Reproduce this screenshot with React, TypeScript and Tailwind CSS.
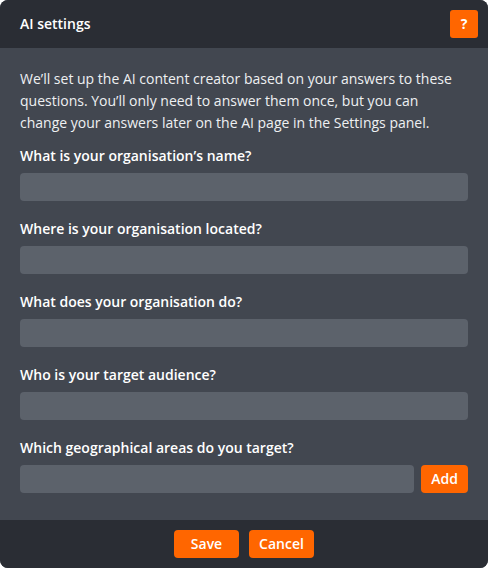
import React from "react";

const questions = [
  "What is your organisation\u2019s name?",
  "Where is your organisation located?",
  "What does your organisation do?",
  "Who is your target audience?",
];

export default function App() {
  return (
    <div
      className="w-[488px] h-[568px] bg-white"
      style={{ fontFamily: '"Open Sans", "Liberation Sans", sans-serif' }}
    >
      <div className="w-full h-full rounded-lg overflow-hidden flex flex-col bg-[#424750]">
        <div className="h-12 bg-[#2a2d34] flex items-center justify-between pl-5 pr-[10px]">
          <h1 className="text-sm font-semibold text-white">AI settings</h1>
          <button className="w-7 h-7 rounded-[3px] bg-[#ff6600] text-white text-sm font-bold flex items-center justify-center">
            ?
          </button>
        </div>

        <div className="flex-1 px-5 pt-5 pb-[27px] flex flex-col">
          <p className="text-sm leading-[22px] text-[#eef0f2] mb-3">
            We’ll set up the AI content creator based on your answers to these
            questions. You’ll only need to answer them once, but you can change
            your answers later on the AI page in the Settings panel.
          </p>

          <div className="flex flex-col gap-[18px]">
            {questions.map((q) => (
              <div key={q}>
                <label className="block text-sm font-semibold leading-5 text-white mb-[7px]">
                  {q}
                </label>
                <input className="w-full h-7 rounded bg-[#5c626b] outline-none px-2 text-sm text-white" />
              </div>
            ))}
            <div>
              <label className="block text-sm font-semibold leading-5 text-white mb-[7px]">
                Which geographical areas do you target?
              </label>
              <div className="flex gap-[7px]">
                <input className="flex-1 min-w-0 h-7 rounded bg-[#5c626b] outline-none px-2 text-sm text-white" />
                <button className="w-[47px] h-7 rounded bg-[#ff6600] text-white text-sm font-semibold">
                  Add
                </button>
              </div>
            </div>
          </div>
        </div>

        <div className="h-12 bg-[#2a2d34] flex items-center justify-center gap-[10px]">
          <button className="w-[65px] h-7 rounded bg-[#ff6600] text-white text-sm font-semibold">
            Save
          </button>
          <button className="w-[65px] h-7 rounded bg-[#ff6600] text-white text-sm font-semibold">
            Cancel
          </button>
        </div>
      </div>
    </div>
  );
}
